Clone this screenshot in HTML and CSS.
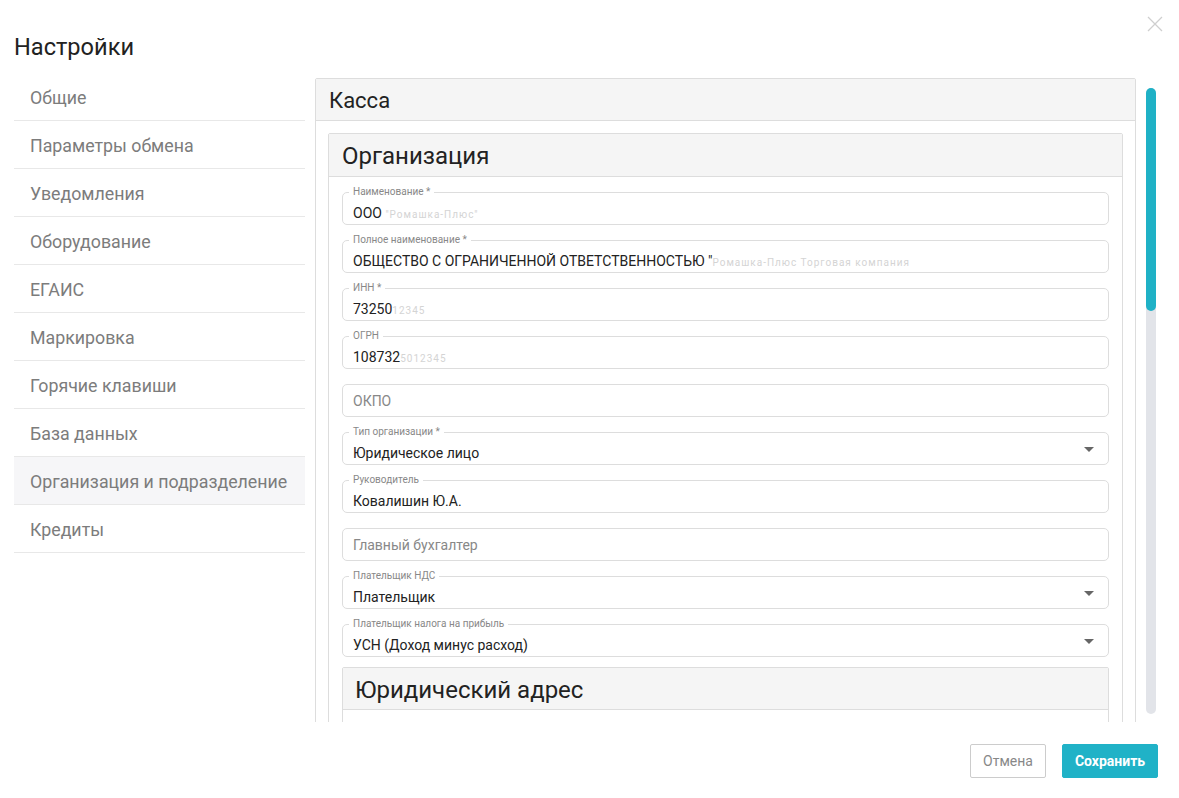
FILE: index.html
```html
<!DOCTYPE html>
<html lang="ru">
<head>
<meta charset="utf-8">
<title>Настройки</title>
<link rel="stylesheet" href="styles.css">
</head>
<body>
<div class="modal">
  <div class="modal-head">
    <h1 class="title">Настройки</h1>
    <button class="close" aria-label="Закрыть">
      <svg width="16" height="16" viewBox="0 0 16 16"><path d="M1 1L15 15M15 1L1 15" stroke="#cfcfcf" stroke-width="1.3" fill="none"/></svg>
    </button>
  </div>
  <div class="modal-body">
    <ul class="menu">
      <li class="menu-item">Общие</li>
      <li class="menu-item">Параметры обмена</li>
      <li class="menu-item">Уведомления</li>
      <li class="menu-item">Оборудование</li>
      <li class="menu-item">ЕГАИС</li>
      <li class="menu-item">Маркировка</li>
      <li class="menu-item">Горячие клавиши</li>
      <li class="menu-item">База данных</li>
      <li class="menu-item active">Организация и подразделение</li>
      <li class="menu-item">Кредиты</li>
    </ul>
    <div class="scroll">
      <section class="panel">
        <div class="panel-head">Касса</div>
        <div class="panel-body">
          <section class="panel sub">
            <div class="panel-head big">Организация</div>
            <div class="fields">
              <div class="field"><span class="label">Наименование *</span><span class="value">ООО <span class="blur">"Ромашка-Плюс"</span></span></div>
              <div class="field"><span class="label">Полное наименование *</span><span class="value">ОБЩЕСТВО С ОГРАНИЧЕННОЙ ОТВЕТСТВЕННОСТЬЮ "<span class="blur">Ромашка-Плюс Торговая компания</span></span></div>
              <div class="field"><span class="label">ИНН *</span><span class="value">73250<span class="blur">12345</span></span></div>
              <div class="field"><span class="label">ОГРН</span><span class="value">108732<span class="blur">5012345</span></span></div>
              <div class="field empty"><span class="placeholder">ОКПО</span></div>
              <div class="field select"><span class="label">Тип организации *</span><span class="value">Юридическое лицо</span><span class="caret"></span></div>
              <div class="field"><span class="label">Руководитель</span><span class="value">Ковалишин Ю.А.</span></div>
              <div class="field empty"><span class="placeholder">Главный бухгалтер</span></div>
              <div class="field select"><span class="label">Плательщик НДС</span><span class="value">Плательщик</span><span class="caret"></span></div>
              <div class="field select"><span class="label">Плательщик налога на прибыль</span><span class="value">УСН (Доход минус расход)</span><span class="caret"></span></div>
              <section class="panel address">
                <div class="panel-head big">Юридический адрес</div>
                <div class="address-body"><span class="toggle"></span></div>
              </section>
            </div>
          </section>
        </div>
      </section>
    </div>
    <div class="scrollbar"><div class="thumb"></div></div>
  </div>
  <div class="modal-foot">
    <button class="btn btn-cancel">Отмена</button>
    <button class="btn btn-save">Сохранить</button>
  </div>
</div>
</body>
</html>
```

FILE: styles.css
```css
* { box-sizing: border-box; }
html, body { margin: 0; padding: 0; background: #fff; }
body { font-family: Roboto, "Noto Sans", "Liberation Sans", sans-serif; color: #222; }

.modal { width: 1179px; height: 798px; padding: 0 21px 0 14px; }

.modal-head { display: flex; justify-content: space-between; align-items: flex-start; height: 73px; }
.title { margin: 33px 0 0; font-size: 23.6px; line-height: 29px; font-weight: 400; color: #222; }
.close { margin: 16px -5px 0 0; padding: 0; border: 0; background: none; width: 16px; height: 16px; cursor: pointer; }
.close svg { display: block; }

.modal-body { display: flex; align-items: flex-start; height: 649px; }

.menu { list-style: none; margin: 0; padding: 0; width: 291px; flex: none; }
.menu-item { height: 48px; line-height: 45px; padding: 2px 0 0 16px; font-size: 17.8px; color: #7c7c7c; border-bottom: 1px solid #e8e8e8; }
.menu-item.active { background: #f6f6f8; }

.scroll { width: 821px; height: 644px; margin: 5px 0 0 10px; overflow: hidden; flex: none; }

.panel { border: 1px solid #ddd; border-radius: 2px; background: #fff; }
.panel-head { background: #f5f5f5; border-bottom: 1px solid #ddd; height: 42px; line-height: 40px; padding: 2px 0 0 13px; font-size: 22px; color: #222; }
.panel-head.big { font-size: 24px; line-height: 41px; height: 43px; }
.panel-body { padding: 12px; }

.fields { display: flex; flex-direction: column; gap: 15px; padding: 15px 13px 20px; }

.field { position: relative; height: 33px; border: 1px solid #ddd; border-radius: 5px; padding: 11px 10px 0; }
.label { position: absolute; top: -7px; left: 6px; padding: 0 4px; background: #fff; font-size: 10px; line-height: 12px; color: #888; }
.value { display: block; font-size: 14px; line-height: 18px; color: #222; white-space: nowrap; }
.blur { color: #d4d4d4; font-size: 10px; letter-spacing: 1px; }
.field.empty { padding-top: 7px; }
.placeholder { display: block; font-size: 14px; line-height: 18px; color: #888; }
.caret { position: absolute; right: 14px; top: 14px; width: 0; height: 0; border-left: 5px solid transparent; border-right: 5px solid transparent; border-top: 5px solid #666; }

.address { margin-top: -5px; }
.address .panel-head { padding-left: 12px; height: 42px; line-height: 40px; }
.address-body { height: 60px; padding: 12px 0 0 360px; }
.toggle { display: block; width: 40px; height: 20px; border-top: 2px solid #1fb1c6; border-radius: 3px; }

.scrollbar { width: 10px; height: 626px; margin: 15px 0 0 10px; background: #e2e4e9; border-radius: 5px; flex: none; }
.thumb { height: 223px; background: #1fb1c6; border-radius: 5px; }

.modal-foot { display: flex; justify-content: flex-end; gap: 16px; margin-top: 22px; }
.btn { font-family: Roboto, "Liberation Sans", sans-serif; font-size: 14px; height: 34px; border-radius: 2px; cursor: pointer; }
.btn-cancel { width: 76px; background: #fff; border: 1px solid #ccc; color: #888; }
.btn-save { width: 96px; background: #20b2c7; border: 1px solid #20b2c7; color: #fff; font-weight: 700; }
```
